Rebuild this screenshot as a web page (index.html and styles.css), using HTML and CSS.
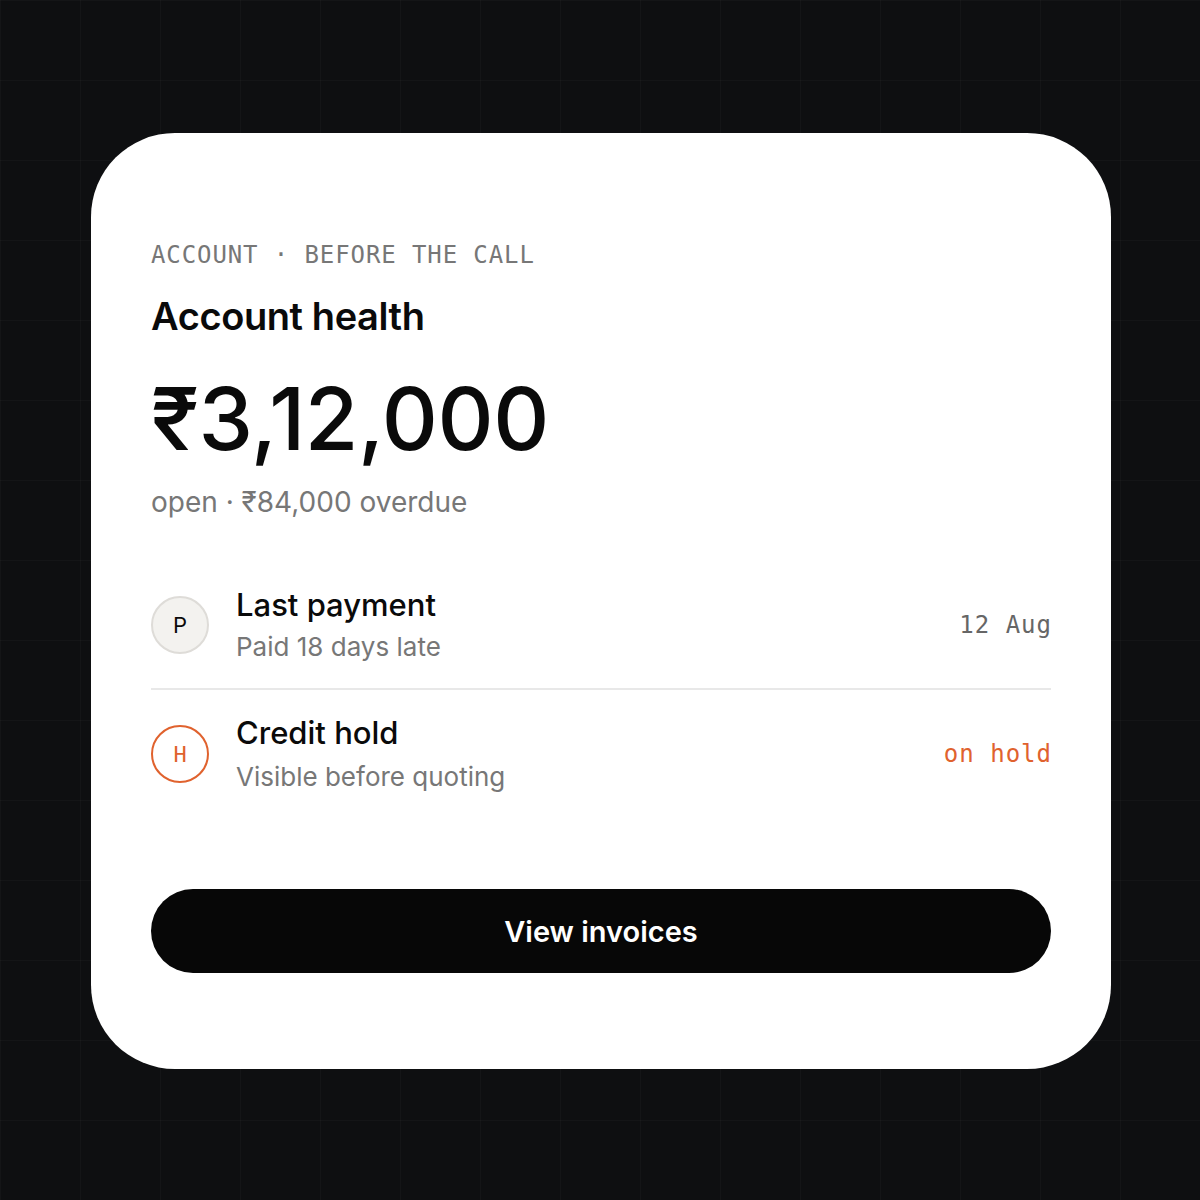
FILE: index.html
```html
<!DOCTYPE html>
<html lang="en">
<head>
  <meta charset="UTF-8">
  <title>Account health</title>
  <link rel="stylesheet" href="styles.css">
</head>
<body>

<div class="card">
  <div class="eyebrow">ACCOUNT · BEFORE THE CALL</div>
  <h1 class="title">Account health</h1>
  <div class="amount">₹3,12,000</div>
  <div class="sub">open · ₹84,000 overdue</div>

  <ul class="rows">
    <li class="row">
      <span class="badge">P</span>
      <div class="info">
        <div class="name">Last payment</div>
        <div class="note">Paid 18 days late</div>
      </div>
      <span class="meta">12 Aug</span>
    </li>
    <li class="row hold">
      <span class="badge">H</span>
      <div class="info">
        <div class="name">Credit hold</div>
        <div class="note">Visible before quoting</div>
      </div>
      <span class="meta">on hold</span>
    </li>
  </ul>

  <a href="#" class="btn">View invoices</a>
</div>

</body>
</html>
```

FILE: styles.css
```css
* {
  margin: 0;
  padding: 0;
  list-style: none;
  box-sizing: border-box;
}

body {
  height: 1200px;
  padding: 2px 0 0 2px;
  display: flex;
  align-items: center;
  justify-content: center;
  background-color: #0e0f11;
  background-image:
    linear-gradient(rgba(255, 255, 255, .025) 1px, transparent 1px),
    linear-gradient(90deg, rgba(255, 255, 255, .025) 1px, transparent 1px);
  background-size: 80px 80px;
  font-family: Inter, "Noto Sans", sans-serif;
  color: #0a0a0a;
}

.card {
  width: 1020px;
  height: 936px;
  background-color: #fff;
  border-radius: 84px;
  padding: 107px 60px 0;
}

.eyebrow {
  font-family: "DejaVu Sans Mono", monospace;
  font-size: 24px;
  line-height: 30px;
  letter-spacing: 0.9px;
  color: #777;
}

.title {
  margin-top: 23px;
  font-size: 38px;
  line-height: 46px;
  font-weight: 600;
  letter-spacing: -0.4px;
}

.amount {
  margin-top: 30px;
  font-size: 87px;
  line-height: 100px;
  font-weight: 500;
  letter-spacing: -0.4px;
}

.sub {
  margin-top: 16px;
  font-size: 28px;
  line-height: 34px;
  color: #777;
}

.rows {
  margin-top: 43px;
}

.row {
  display: flex;
  align-items: center;
  padding: 24px 0;
}

.row + .row {
  border-top: 2px solid #e8e8e8;
}

.badge {
  width: 58px;
  height: 58px;
  border-radius: 50%;
  border: 2px solid #dedcd8;
  background-color: #f3f2ef;
  display: flex;
  align-items: center;
  justify-content: center;
  font-size: 22px;
  flex-shrink: 0;
}

.hold .badge {
  border-color: #e0622e;
  background-color: #fff;
  color: #e0622e;
  font-family: "DejaVu Sans Mono", monospace;
}

.info {
  flex: 1;
  margin-left: 27px;
}

.name {
  font-size: 31px;
  line-height: 38px;
  font-weight: 500;
}

.note {
  margin-top: 6px;
  font-size: 26px;
  line-height: 34px;
  color: #777;
}

.hold .note {
  margin-top: 8px;
}

.meta {
  font-family: "DejaVu Sans Mono", monospace;
  font-size: 24px;
  letter-spacing: 1px;
  margin-right: -1px;
  color: #666;
}

.hold .meta {
  color: #e0622e;
}

.btn {
  display: flex;
  align-items: center;
  justify-content: center;
  height: 84px;
  margin-top: 71px;
  border-radius: 42px;
  background-color: #070707;
  color: #fff;
  text-decoration: none;
  font-size: 29px;
  font-weight: 600;
}
```
